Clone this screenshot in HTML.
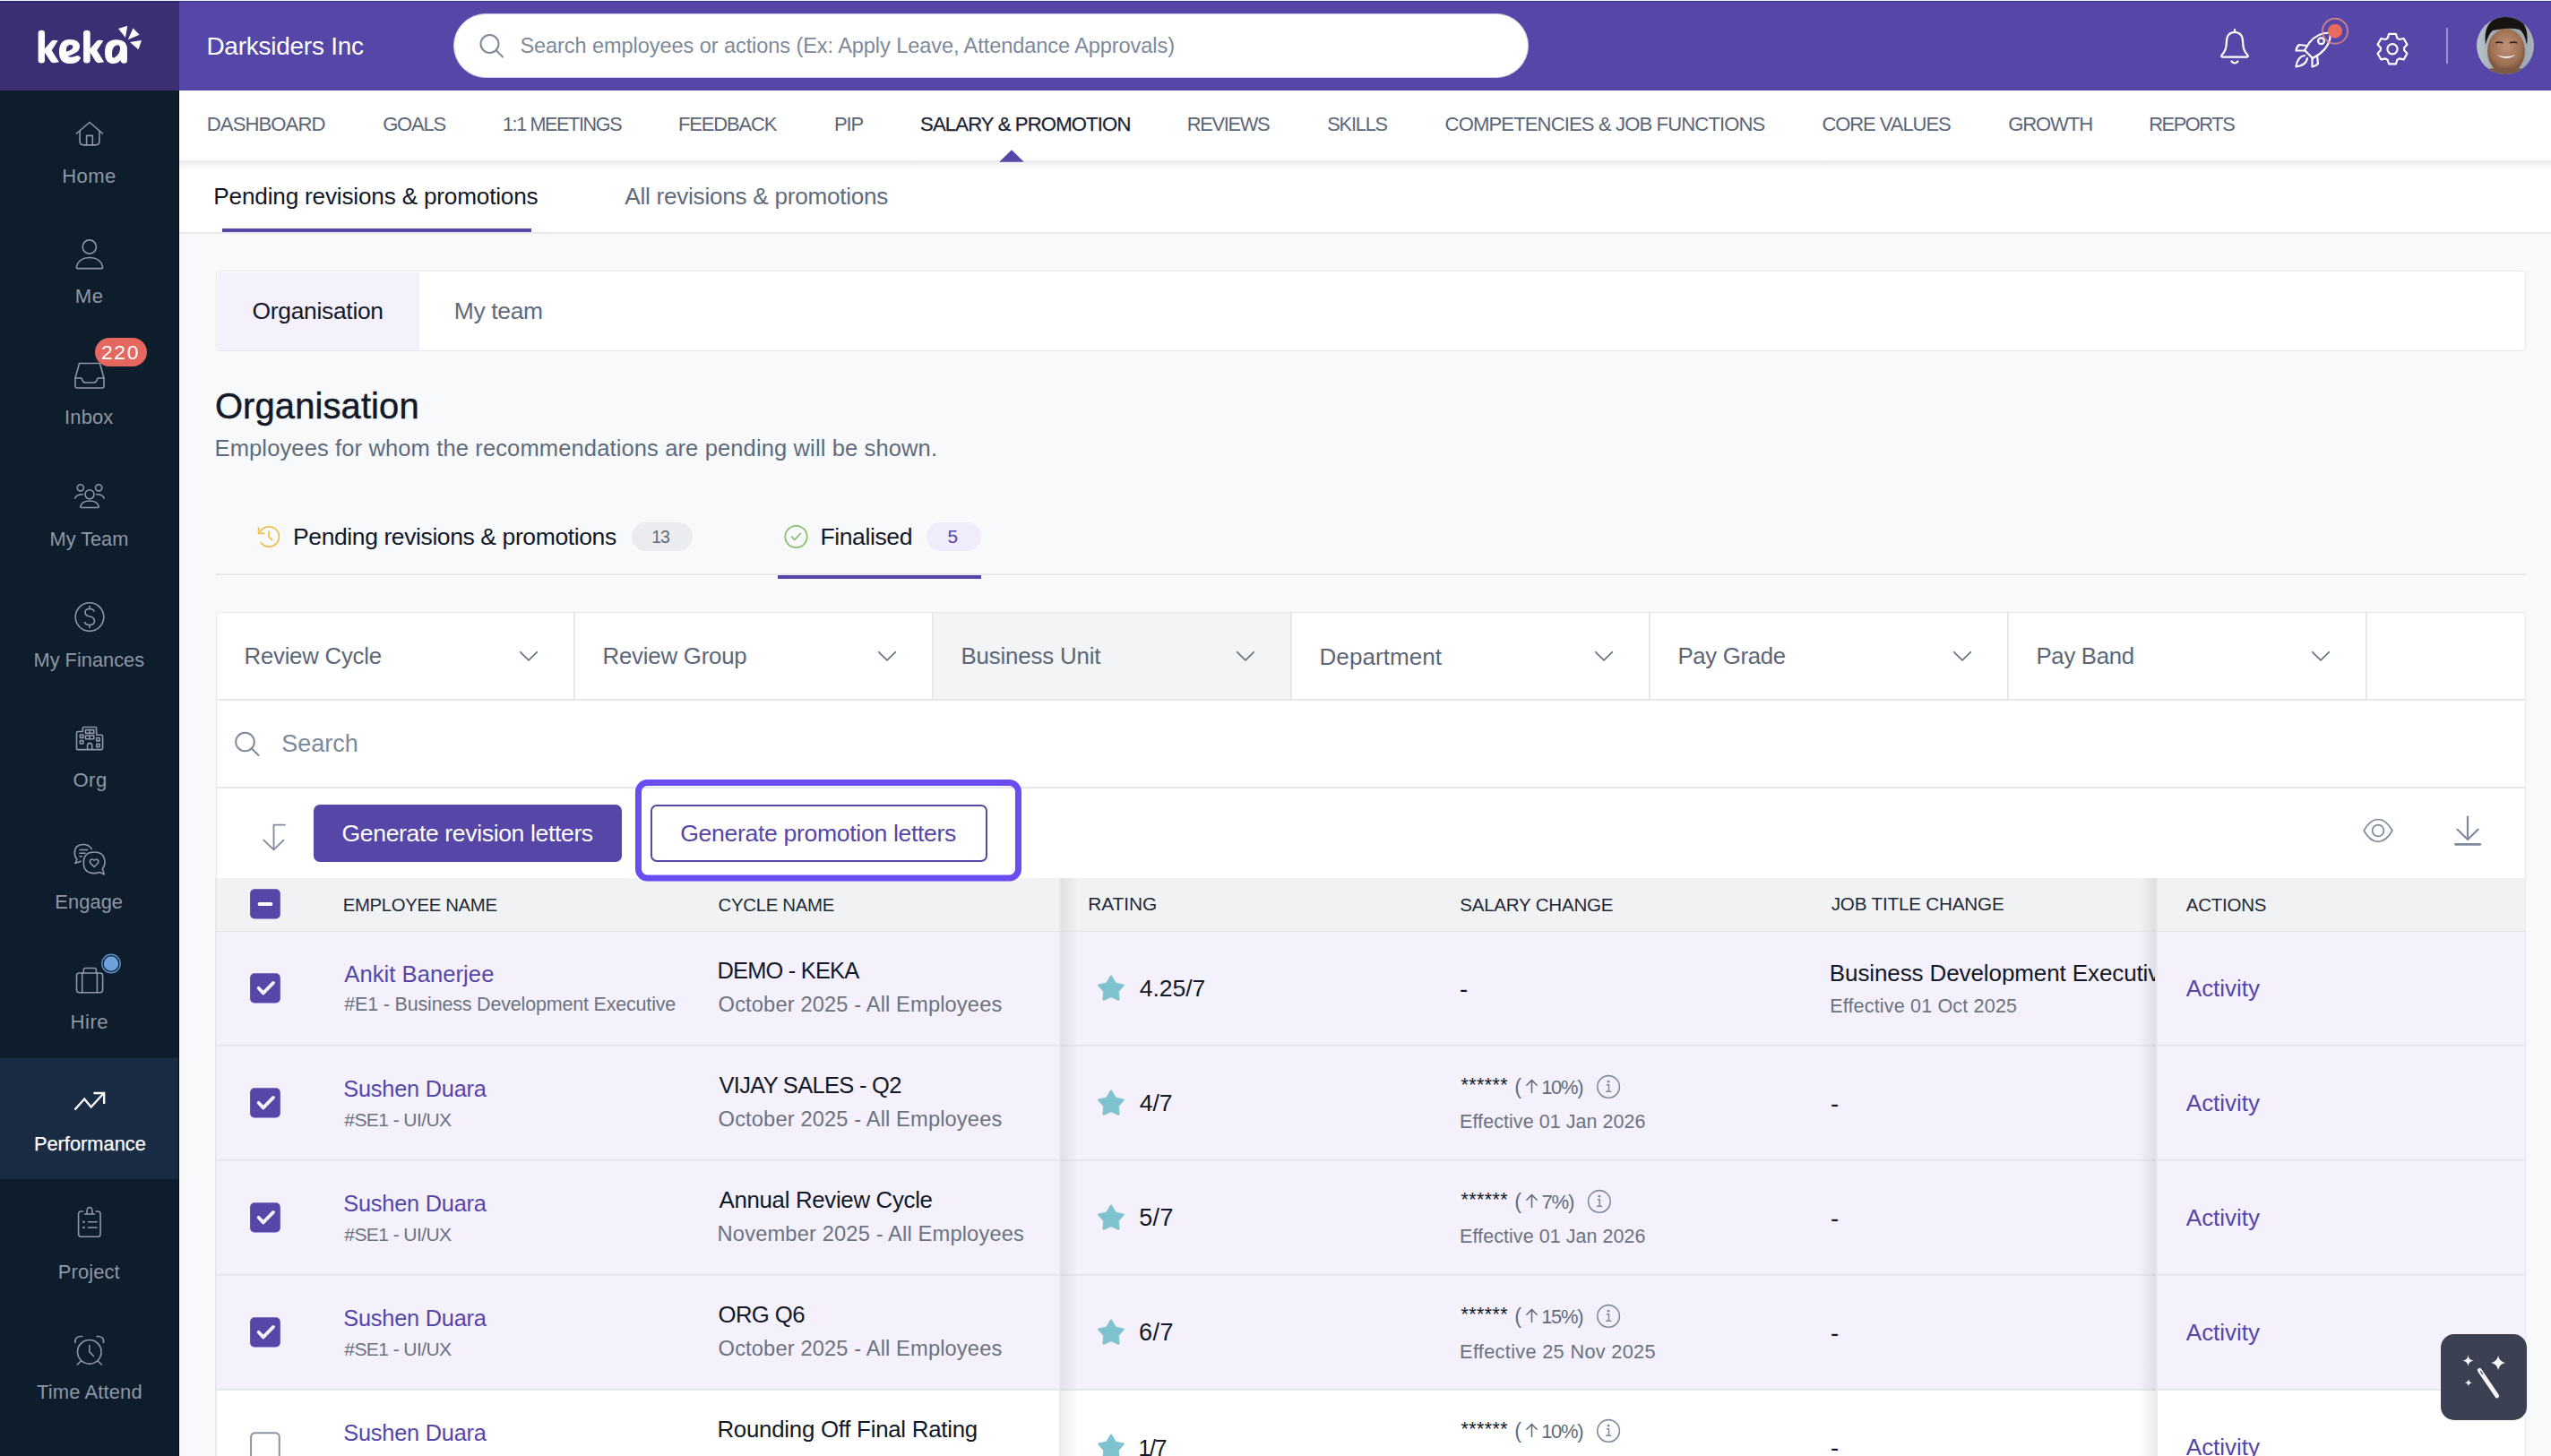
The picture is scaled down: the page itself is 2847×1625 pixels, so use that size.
<!DOCTYPE html>
<html><head><meta charset="utf-8"><title>Keka - Salary &amp; Promotion</title>
<style>
html,body{margin:0;padding:0}
body{width:2847px;height:1625px;overflow:hidden;position:relative;background:#f8f9fb;font-family:"Liberation Sans",sans-serif}
.b{position:absolute;box-sizing:border-box}
.t{position:absolute;white-space:nowrap;line-height:1;font-family:"Liberation Sans",sans-serif}
svg.ov{position:absolute;left:0;top:0}
</style></head><body>
<!-- sidebar -->
<div class="b" style="left:0;top:0;width:200px;height:1625px;background:#0e1d2c"></div>
<div class="b" style="left:0;top:0;width:200px;height:101px;background:#3b2f73"></div>
<div class="b" style="left:0;top:1181px;width:200px;height:135px;background:#192c43"></div>
<div class="b" style="left:198.8px;top:101px;width:1.2px;height:1524px;background:#03101c"></div>
<!-- topbar -->
<div class="b" style="left:200px;top:0;width:2647px;height:101px;background:#5546a8"></div>
<div class="b" style="left:506px;top:15px;width:1200px;height:71.5px;border-radius:36px;background:#fff;border:1.5px solid #cfcbe6"></div>
<div class="b" style="left:2730px;top:31px;width:2px;height:40px;background:#9d93d3"></div>
<!-- nav -->
<div class="b" style="left:200px;top:101px;width:2647px;height:78px;background:#fff"></div>
<!-- subtabs -->
<div class="b" style="left:200px;top:179px;width:2647px;height:82px;background:#fff;border-bottom:2px solid #e6e8eb"></div>
<div class="b" style="left:248px;top:254.5px;width:344.5px;height:4px;background:#5546a8"></div>
<div class="b" style="left:200px;top:179px;width:2647px;height:12px;background:linear-gradient(to bottom,rgba(30,40,70,0.085) 0px,rgba(30,40,70,0.07) 3px,rgba(0,0,0,0.03) 6px,rgba(0,0,0,0) 11px)"></div>
<!-- org box -->
<div class="b" style="left:241px;top:302px;width:2578px;height:90px;background:#fff;border:1.5px solid #e6e8eb;border-radius:4px"></div>
<div class="b" style="left:242.5px;top:303.5px;width:225px;height:87px;background:#f4f0fc;border-radius:3px 0 0 3px"></div>
<!-- status tabs -->
<div class="b" style="left:241px;top:640px;width:2578px;height:2px;background:#e6e8eb"></div>
<div class="b" style="left:868px;top:642px;width:227px;height:4px;background:#5546a8"></div>
<div class="b" style="left:705px;top:583px;width:68px;height:31.5px;border-radius:16px;background:#ebecef"></div>
<div class="b" style="left:1034.4px;top:583px;width:61px;height:31.5px;border-radius:16px;background:#f0ecfc"></div>
<!-- filter card -->
<div class="b" style="left:241px;top:682.5px;width:2578px;height:298px;background:#fff;border:1.5px solid #e6e8eb;border-bottom:none;border-radius:4px 4px 0 0"></div>
<div class="b" style="left:1041px;top:684px;width:400px;height:97px;background:#f3f4f6"></div>
<div class="b" style="left:241px;top:780px;width:2578px;height:2px;background:#e6e8eb"></div>
<div class="b" style="left:241px;top:877.5px;width:2578px;height:2px;background:#e6e8eb"></div>
<div class="b" style="left:640px;top:684px;width:2px;height:97px;background:#e6e8eb"></div>
<div class="b" style="left:1040px;top:684px;width:2px;height:97px;background:#e6e8eb"></div>
<div class="b" style="left:1440px;top:684px;width:2px;height:97px;background:#e6e8eb"></div>
<div class="b" style="left:1840px;top:684px;width:2px;height:97px;background:#e6e8eb"></div>
<div class="b" style="left:2240px;top:684px;width:2px;height:97px;background:#e6e8eb"></div>
<div class="b" style="left:2640px;top:684px;width:2px;height:97px;background:#e6e8eb"></div>
<!-- buttons -->
<div class="b" style="left:350px;top:898px;width:344px;height:64px;border-radius:7px;background:#5546a8"></div>
<div class="b" style="left:726px;top:898px;width:376px;height:64px;border-radius:7px;background:#fff;border:2px solid #5546a8"></div>
<!-- table -->
<div class="b" style="left:241px;top:980px;width:2578px;height:59px;background:#f1f2f4"></div>
<div class="b" style="left:241px;top:1038.5px;width:2578px;height:1.5px;background:#e4e6ea"></div>
<div class="b" style="left:241px;top:1040px;width:2578px;height:511px;background:#f4f1fc"></div>
<div class="b" style="left:241px;top:1551px;width:2578px;height:74px;background:#fff"></div>
<div class="b" style="left:241px;top:1166px;width:2578px;height:1.5px;background:#e9e6f2"></div>
<div class="b" style="left:241px;top:1294px;width:2578px;height:1.5px;background:#e9e6f2"></div>
<div class="b" style="left:241px;top:1422px;width:2578px;height:1.5px;background:#e9e6f2"></div>
<div class="b" style="left:241px;top:1550px;width:2578px;height:1.5px;background:#e6e8eb"></div>
<!-- sticky shadows -->
<div class="b" style="left:1182px;top:980px;width:2px;height:645px;background:#e8e9ec"></div>
<div class="b" style="left:1184px;top:980px;width:20px;height:645px;background:linear-gradient(to right,rgba(0,0,0,0.07),rgba(0,0,0,0))"></div>
<div class="b" style="left:2386px;top:980px;width:20px;height:645px;background:linear-gradient(to left,rgba(0,0,0,0.08),rgba(0,0,0,0))"></div>
<div class="b" style="left:2406px;top:980px;width:2px;height:645px;background:#e8e9ec"></div>
<div class="b" style="left:240px;top:980px;width:2px;height:645px;background:#e8e9ec"></div>
<div class="b" style="left:2817.5px;top:980px;width:1.5px;height:645px;background:#e6e8eb"></div>
<div class="b" style="left:0;top:0;width:2847px;height:1px;background:#eef4ee"></div>
<div class="b" style="left:0;top:1px;width:200px;height:1.5px;background:#2f2670"></div>
<div class="b" style="left:200px;top:1px;width:2647px;height:1.5px;background:#4a3ba3"></div>
<svg class="ov" width="2847" height="1625" viewBox="0 0 2847 1625">
<svg x="30" y="20" width="140" height="60" viewBox="0 0 2551 1093"><g fill="#fff"><path d="M230,310 Q230,250 297,250 Q365,250 365,310 L365,625 L495,472 Q515,450 555,450 L632,458 L505,662 L655,898 L545,915 Q505,915 485,888 L365,705 L365,860 Q365,918 297,918 Q230,918 230,860 Z"/><path fill-rule="evenodd" d="M1095,815 Q1040,930 880,930 Q655,930 655,690 Q655,435 875,435 Q1075,435 1075,585 Q1075,680 955,728 L830,785 Q905,810 1000,772 Q1060,748 1095,815 Z M800,688 Q790,545 885,548 Q945,552 935,600 Q925,650 800,688 Z"/><path d="M1150,310 Q1150,250 1218,250 Q1288,250 1288,310 L1288,625 L1418,472 Q1438,450 1478,450 L1555,458 L1425,662 L1570,898 L1462,915 Q1422,915 1402,888 L1288,705 L1288,860 Q1288,918 1218,918 Q1150,918 1150,860 Z"/><path fill-rule="evenodd" d="M2040,870 Q2040,925 1975,925 Q1915,925 1905,860 Q1840,930 1760,930 Q1585,930 1585,700 Q1585,440 1815,440 Q2040,440 2040,640 Z M1735,790 Q1720,670 1760,600 Q1800,548 1850,550 Q1905,560 1895,640 Q1880,740 1790,800 Q1745,825 1735,790 Z"/><path d="M1860,218 L2045,160 L2005,400 Z"/><path d="M2160,210 L2288,340 L2055,442 Z"/><path d="M2095,492 L2332,455 L2268,642 Z"/></g></svg>
<path d="M1115.2,180.8 L1129,167.2 L1142.8,180.8 Z" fill="#5546a8"/>
<g fill="none" stroke="#fff" stroke-width="2.2" stroke-linecap="round" stroke-linejoin="round"><path d="M2494,36 C2486.5,36 2484.8,42 2484.8,48 C2484.8,55 2482.5,58.5 2479.6,61.5 Q2478.3,63.6 2481,63.6 L2507,63.6 Q2509.7,63.6 2508.4,61.5 C2505.5,58.5 2503.2,55 2503.2,48 C2503.2,42 2501.5,36 2494,36 Z"/><path d="M2494,33 L2494,36"/><path d="M2490.5,68.5 Q2494,72.5 2497.5,68.5"/></g>
<g fill="none" stroke="#fff" stroke-width="2.2" stroke-linecap="round" stroke-linejoin="round"><path d="M2601,36.5 Q2586,36 2577,48 L2572,56 L2581,65 L2589,60 Q2601,51 2601,36.5 Z"/><circle cx="2590.5" cy="45.8" r="3.4"/><path d="M2575,51 L2566,50 Q2563,52 2562.5,56.5 L2572.5,56.5"/><path d="M2586,62 L2587,71 Q2585,73.5 2580.5,74.5 L2580.5,64.5"/><path d="M2572,62 Q2564,63 2562.5,74.5 Q2574,73 2575,65"/></g>
<circle cx="2606" cy="34.7" r="14" fill="none" stroke="#e58f88" stroke-opacity="0.75" stroke-width="2"/><circle cx="2606" cy="34.7" r="8" fill="#e96a5e"/>
<path d="M2664.63,42.64 L2666.13,37.94 L2673.87,37.94 L2675.37,42.64 L2677.76,44.02 L2682.58,42.97 L2686.45,49.67 L2683.13,53.32 L2683.13,56.08 L2686.45,59.73 L2682.58,66.43 L2677.76,65.38 L2675.37,66.76 L2673.87,71.46 L2666.13,71.46 L2664.63,66.76 L2662.24,65.38 L2657.42,66.43 L2653.55,59.73 L2656.87,56.08 L2656.87,53.32 L2653.55,49.67 L2657.42,42.97 L2662.24,44.02 Z" fill="none" stroke="#fff" stroke-width="2.2" stroke-linecap="round" stroke-linejoin="round"/><circle cx="2670" cy="54.7" r="5.6" fill="none" stroke="#fff" stroke-width="2.2" stroke-linecap="round" stroke-linejoin="round"/>
<defs><clipPath id="av"><circle cx="2796" cy="51" r="32"/></clipPath><radialGradient id="fg" cx="0.5" cy="0.4" r="0.6"><stop offset="0" stop-color="#c09276"/><stop offset="0.7" stop-color="#9c6e52"/><stop offset="1" stop-color="#6e4a36"/></radialGradient><linearGradient id="bgav" x1="0" y1="0" x2="1" y2="0"><stop offset="0" stop-color="#b9c3ca"/><stop offset="0.5" stop-color="#8f9aa3"/><stop offset="1" stop-color="#a9b3ba"/></linearGradient></defs><g clip-path="url(#av)"><rect x="2764" y="19" width="64" height="64" fill="url(#bgav)"/><ellipse cx="2797" cy="57" rx="21" ry="25" fill="url(#fg)"/><path d="M2774,50 Q2770,20 2797,18 Q2824,19 2820,50 Q2817,36 2812,33 Q2800,30 2782,34 Q2777,38 2774,50 Z" fill="#161311"/><path d="M2768,84 Q2772,74 2797,76 Q2822,74 2826,84 Z" fill="#7d5a45"/><path d="M2786,61 Q2797,69 2808,61 Q2797,65 2786,61 Z" fill="#f4efe9"/><path d="M2785,48 Q2789,46 2793,48 M2801,48 Q2805,46 2809,48" stroke="#2a1d17" stroke-width="1.6" fill="none"/></g>
<g fill="none" stroke="#7d8a9a" stroke-width="2" stroke-linecap="round"><circle cx="546.5" cy="49" r="10"/><path d="M553.8,56.3 L561,63.5"/></g>
<g transform="translate(75,125)" fill="none" stroke="#8e97a6" stroke-width="1.6" stroke-linecap="round" stroke-linejoin="round"><path d="M10.3,24 L25,11.5 L39.5,24"/><path d="M14.1,21.3 L14.1,32.5 Q14.1,36.9 18.5,36.9 L31.5,36.9 Q35.9,36.9 35.9,32.5 L35.9,21.3"/><path d="M21.6,36.9 L21.6,26.4 L28.3,26.4 L28.3,36.9"/></g>
<g fill="none" stroke="#8e97a6" stroke-width="1.6" stroke-linecap="round" stroke-linejoin="round"><circle cx="99.8" cy="275.5" r="7.6"/><path d="M86.2,299.6 L113.8,299.6 Q115,299.6 114.5,297.5 Q112,287.5 100,287.5 Q88,287.5 85.5,297.5 Q85,299.6 86.2,299.6 Z"/></g>
<g fill="none" stroke="#8e97a6" stroke-width="1.6" stroke-linecap="round" stroke-linejoin="round"><path d="M88.5,405.5 L111.5,405.5 L116,422 L116,431 Q116,433 114,433 L86,433 Q84,433 84,431 L84,422 Z"/><path d="M84,422 L91,422 L92.5,425.5 Q93.5,427 95,427 L105,427 Q106.5,427 107.5,425.5 L109,422 L116,422"/></g>
<rect x="106" y="377" width="58" height="32" rx="16" fill="#e5675f"/>
<g fill="none" stroke="#8e97a6" stroke-width="1.6" stroke-linecap="round" stroke-linejoin="round"><circle cx="100" cy="551.8" r="5"/><path d="M90.8,566.5 L109.2,566.5 Q110.5,566.5 110,564.5 Q108,559 100,559 Q92,559 90,564.5 Q89.5,566.5 90.8,566.5 Z"/><circle cx="89.8" cy="544.3" r="3.6"/><circle cx="110.2" cy="544.3" r="3.6"/><path d="M83.8,556 Q85,551.8 92.5,551.8"/><path d="M107.5,551.8 Q115,551.8 116.2,556"/></g>
<g fill="none" stroke="#8e97a6" stroke-width="1.6" stroke-linecap="round" stroke-linejoin="round"><circle cx="100" cy="688.6" r="15.8"/><path d="M105,682 Q104,679.5 100,679.5 Q95,679.5 95,683.5 Q95,687 100,688 Q105.5,689 105.5,693 Q105.5,697.5 100,697.5 Q95.5,697.5 94.5,694.5"/><path d="M100,676.5 L100,679.5 M100,697.5 L100,700.5"/></g>
<g fill="none" stroke="#8e97a6" stroke-width="1.6" stroke-linecap="round" stroke-linejoin="round"><path d="M85.5,836.2 L85.5,818 Q85.5,816.5 87,816.5 L92.3,816.5 L92.3,813 Q92.3,811.5 93.8,811.5 L106,811.5 Q107.6,811.5 107.6,813 L107.6,820.3 L113,820.3 Q114.6,820.3 114.6,821.8 L114.6,835 Q114.6,836.6 113,836.6 L87,836.6 Q85.5,836.6 85.5,836.2 Z"/><rect x="89.4" y="820" width="3.4" height="3.4"/><rect x="89.4" y="826.6" width="3.4" height="3.4"/><rect x="107.8" y="823.5" width="3.4" height="3.4"/><rect x="107.8" y="830.2" width="3.4" height="3.4"/><rect x="95.4" y="814.6" width="9.4" height="3.8"/><path d="M100.1,814.6 L100.1,818.4"/><rect x="95.4" y="821" width="9.4" height="3.8"/><path d="M100.1,821 L100.1,824.8"/><path d="M97.6,836.5 L97.6,832 Q97.6,829.4 100.1,829.4 Q102.7,829.4 102.7,832 L102.7,836.5"/></g>
<g fill="none" stroke="#8e97a6" stroke-width="1.6" stroke-linecap="round" stroke-linejoin="round"><path d="M102.3,947.5 Q99,942.5 93.3,942.5 Q83.3,942.5 83.3,952 Q83.3,956.5 86,959 L84,963.5 L90,961.2"/><path d="M89,948.5 L97.5,948.5 M89,952.2 L95,952.2 M89,955.8 L91.5,955.8"/><path d="M116.3,975.8 L114.3,969.8 Q117,966.5 117,962.8 Q117,951 105.1,951 Q93.3,951 93.3,962.8 Q93.3,974.6 105.1,974.6 Q108.5,974.6 111,973.5 Z"/><path d="M105.1,967.5 L101.3,963.8 Q99.6,961.6 101,959.8 Q103,958 105.1,960.3 Q107.2,958 109.2,959.8 Q110.6,961.6 108.9,963.8 Z"/></g>
<g fill="none" stroke="#8e97a6" stroke-width="1.6" stroke-linecap="round" stroke-linejoin="round"><rect x="85.5" y="1086" width="29.1" height="21.7" rx="3"/><path d="M93.3,1086 L93.3,1082.5 Q93.3,1080.5 95.3,1080.5 L105.4,1080.5 Q107.4,1080.5 107.4,1082.5 L107.4,1086"/><path d="M91.7,1086 L91.7,1107.7 M108.4,1086 L108.4,1107.7"/></g>
<circle cx="124" cy="1075.5" r="10.2" fill="#0e1d2c" stroke="#5b8fcf" stroke-width="1.4"/><circle cx="124" cy="1075.5" r="8.2" fill="#6ea0da"/>
<g fill="none" stroke="#fff" stroke-width="2.3" stroke-linecap="square" stroke-linejoin="miter"><path d="M84.3,1237.6 L94.2,1226.6 L101.6,1235.6 L115.6,1220.4"/><path d="M105.6,1220 L116.2,1220 L116.2,1230.8"/></g>
<g fill="none" stroke="#8e97a6" stroke-width="1.6" stroke-linecap="round" stroke-linejoin="round"><path d="M92.5,1352 L90.5,1352 Q87.6,1352 87.6,1355 L87.6,1377.3 Q87.6,1380.3 90.6,1380.3 L109.1,1380.3 Q112.1,1380.3 112.1,1377.3 L112.1,1355 Q112.1,1352 109.1,1352 L107.2,1352"/><path d="M94.5,1355 L105.5,1355"/><path d="M97,1354.5 L97,1352.5 Q97,1347.5 100,1347.5 Q103,1347.5 103,1352.5 L103,1354.5"/><path d="M98.5,1363.8 L108,1363.8 M98.5,1370 L108,1370"/></g>
<circle cx="93.5" cy="1363.8" r="1.3" fill="#8e97a6"/><circle cx="93.5" cy="1370" r="1.3" fill="#8e97a6"/>
<g fill="none" stroke="#8e97a6" stroke-width="1.6" stroke-linecap="round" stroke-linejoin="round"><circle cx="99.8" cy="1508.8" r="13.3"/><path d="M99.8,1501.5 L99.8,1508.8 L104.5,1513.5"/><path d="M84,1498.5 Q83,1491 91.5,1491.5"/><path d="M108,1491.5 Q116.5,1491 115.5,1498.5"/><path d="M86.3,1523 L90.3,1519 M113.3,1523 L109.3,1519"/></g>
<g fill="none" stroke="#f0bd45" stroke-width="1.7" stroke-linecap="round" stroke-linejoin="round"><path d="M290.8,593 A11.2,11.2 0 1 1 291.2,605.6"/><path d="M288.6,589.3 L288.6,595.4 L294.8,595.4"/><path d="M300,593.4 L300,599 L303.6,602.6"/></g>
<g fill="none" stroke="#86bd6d" stroke-width="1.7" stroke-linecap="round" stroke-linejoin="round"><circle cx="888.5" cy="599" r="12.2"/><path d="M883.6,599.1 L886.8,602.3 L893.3,595.5"/></g>
<path d="M580.8,727.8 L590.0,736.8 L599.1999999999999,727.8" fill="none" stroke="#6b7686" stroke-width="1.8" stroke-linecap="round" stroke-linejoin="round"/>
<path d="M980.8,727.8 L990.0,736.8 L999.1999999999999,727.8" fill="none" stroke="#6b7686" stroke-width="1.8" stroke-linecap="round" stroke-linejoin="round"/>
<path d="M1380.8,727.8 L1390.0,736.8 L1399.2,727.8" fill="none" stroke="#6b7686" stroke-width="1.8" stroke-linecap="round" stroke-linejoin="round"/>
<path d="M1780.8,727.8 L1790.0,736.8 L1799.2,727.8" fill="none" stroke="#6b7686" stroke-width="1.8" stroke-linecap="round" stroke-linejoin="round"/>
<path d="M2180.8,727.8 L2190.0,736.8 L2199.2000000000003,727.8" fill="none" stroke="#6b7686" stroke-width="1.8" stroke-linecap="round" stroke-linejoin="round"/>
<path d="M2580.8,727.8 L2590.0,736.8 L2599.2000000000003,727.8" fill="none" stroke="#6b7686" stroke-width="1.8" stroke-linecap="round" stroke-linejoin="round"/>
<g fill="none" stroke="#7d8a9a" stroke-width="2" stroke-linecap="round"><circle cx="273.5" cy="828" r="10.3"/><path d="M281,835.5 L288.6,843"/></g>
<g fill="none" stroke="#7d8a9a" stroke-width="1.8" stroke-linecap="round" stroke-linejoin="round"><path d="M318,920.6 L305.5,920.6 L305.5,948"/><path d="M294.3,937.6 L305.5,948.3 L316.5,937.6"/></g>
<g fill="none" stroke="#7d8a9a" stroke-width="1.7" stroke-linecap="round" stroke-linejoin="round"><path d="M2638.2,927 Q2645,914.5 2654,914.5 Q2663,914.5 2669.8,927 Q2663,939.3 2654,939.3 Q2645,939.3 2638.2,927 Z"/><circle cx="2654" cy="927" r="6.4"/></g>
<g fill="none" stroke="#7d8a9a" stroke-width="2.2" stroke-linecap="round" stroke-linejoin="round"><path d="M2754,911.5 L2754,936.5"/><path d="M2742.5,925.8 L2754,937 L2765.5,925.8"/><path d="M2740.5,942.3 L2767.8,942.3" stroke-width="2.7"/></g>
<rect x="279.1" y="992.2" width="33.7" height="33.2" rx="5" fill="#5546a8"/><path d="M289.5,1009 L302.5,1009" stroke="#fff" stroke-width="3.8" stroke-linecap="round"/>
<rect x="279.1" y="1086.2" width="33.7" height="33.2" rx="5" fill="#5546a8"/><path d="M288.6,1102.8 L293.8,1108.4 L305,1096.9" fill="none" stroke="#f4f1fc" stroke-width="3.8" stroke-linecap="round" stroke-linejoin="round"/>
<path d="M1240.00,1089.60 L1244.70,1097.53 L1253.70,1099.55 L1247.61,1106.47 L1248.46,1115.65 L1240.00,1112.00 L1231.54,1115.65 L1232.39,1106.47 L1226.30,1099.55 L1235.30,1097.53 Z" fill="#7fc3d1" stroke="#7fc3d1" stroke-width="2.2" stroke-linejoin="round"/>
<rect x="279.1" y="1214.2" width="33.7" height="33.2" rx="5" fill="#5546a8"/><path d="M288.6,1230.8 L293.8,1236.4 L305,1224.9" fill="none" stroke="#f4f1fc" stroke-width="3.8" stroke-linecap="round" stroke-linejoin="round"/>
<path d="M1240.00,1217.60 L1244.70,1225.53 L1253.70,1227.55 L1247.61,1234.47 L1248.46,1243.65 L1240.00,1240.00 L1231.54,1243.65 L1232.39,1234.47 L1226.30,1227.55 L1235.30,1225.53 Z" fill="#7fc3d1" stroke="#7fc3d1" stroke-width="2.2" stroke-linejoin="round"/>
<g fill="none" stroke="#5f6b7a" stroke-width="1.5" stroke-linecap="round" stroke-linejoin="round"><path d="M1709.5,1205.6 L1709.5,1219.4"/><path d="M1703.8,1211.3 L1709.5,1205.6 L1715.2,1211.3"/></g>
<g fill="none" stroke="#7d8a9a" stroke-width="1.6"><circle cx="1795.1" cy="1212.9" r="12.3"/></g><circle cx="1795.1" cy="1207.2" r="1.4" fill="#7d8a9a"/><path d="M1792.8999999999999,1210.8 L1795.5,1210.8 L1795.5,1218.2 M1792.1,1218.2 L1798.3,1218.2" fill="none" stroke="#7d8a9a" stroke-width="1.5"/>
<rect x="279.1" y="1342.2" width="33.7" height="33.2" rx="5" fill="#5546a8"/><path d="M288.6,1358.8 L293.8,1364.4 L305,1352.9" fill="none" stroke="#f4f1fc" stroke-width="3.8" stroke-linecap="round" stroke-linejoin="round"/>
<path d="M1240.00,1345.60 L1244.70,1353.53 L1253.70,1355.55 L1247.61,1362.47 L1248.46,1371.65 L1240.00,1368.00 L1231.54,1371.65 L1232.39,1362.47 L1226.30,1355.55 L1235.30,1353.53 Z" fill="#7fc3d1" stroke="#7fc3d1" stroke-width="2.2" stroke-linejoin="round"/>
<g fill="none" stroke="#5f6b7a" stroke-width="1.5" stroke-linecap="round" stroke-linejoin="round"><path d="M1709.5,1333.6 L1709.5,1347.4"/><path d="M1703.8,1339.3 L1709.5,1333.6 L1715.2,1339.3"/></g>
<g fill="none" stroke="#7d8a9a" stroke-width="1.6"><circle cx="1784.9" cy="1340.9" r="12.3"/></g><circle cx="1784.9" cy="1335.2" r="1.4" fill="#7d8a9a"/><path d="M1782.7,1338.8 L1785.3000000000002,1338.8 L1785.3000000000002,1346.2 M1781.9,1346.2 L1788.1000000000001,1346.2" fill="none" stroke="#7d8a9a" stroke-width="1.5"/>
<rect x="279.1" y="1470.2" width="33.7" height="33.2" rx="5" fill="#5546a8"/><path d="M288.6,1486.8 L293.8,1492.4 L305,1480.9" fill="none" stroke="#f4f1fc" stroke-width="3.8" stroke-linecap="round" stroke-linejoin="round"/>
<path d="M1240.00,1473.60 L1244.70,1481.53 L1253.70,1483.55 L1247.61,1490.47 L1248.46,1499.65 L1240.00,1496.00 L1231.54,1499.65 L1232.39,1490.47 L1226.30,1483.55 L1235.30,1481.53 Z" fill="#7fc3d1" stroke="#7fc3d1" stroke-width="2.2" stroke-linejoin="round"/>
<g fill="none" stroke="#5f6b7a" stroke-width="1.5" stroke-linecap="round" stroke-linejoin="round"><path d="M1709.5,1461.6 L1709.5,1475.4"/><path d="M1703.8,1467.3 L1709.5,1461.6 L1715.2,1467.3"/></g>
<g fill="none" stroke="#7d8a9a" stroke-width="1.6"><circle cx="1795.1" cy="1468.9" r="12.3"/></g><circle cx="1795.1" cy="1463.2" r="1.4" fill="#7d8a9a"/><path d="M1792.8999999999999,1466.8 L1795.5,1466.8 L1795.5,1474.2 M1792.1,1474.2 L1798.3,1474.2" fill="none" stroke="#7d8a9a" stroke-width="1.5"/>
<rect x="280.1" y="1599.2" width="31.7" height="31.2" rx="4.5" fill="#fff" stroke="#8a94a3" stroke-width="2"/>
<path d="M1240.00,1601.60 L1244.70,1609.53 L1253.70,1611.55 L1247.61,1618.47 L1248.46,1627.65 L1240.00,1624.00 L1231.54,1627.65 L1232.39,1618.47 L1226.30,1611.55 L1235.30,1609.53 Z" fill="#7fc3d1" stroke="#7fc3d1" stroke-width="2.2" stroke-linejoin="round"/>
<g fill="none" stroke="#5f6b7a" stroke-width="1.5" stroke-linecap="round" stroke-linejoin="round"><path d="M1709.5,1589.6 L1709.5,1603.4"/><path d="M1703.8,1595.3 L1709.5,1589.6 L1715.2,1595.3"/></g>
<g fill="none" stroke="#7d8a9a" stroke-width="1.6"><circle cx="1795.1" cy="1596.9" r="12.3"/></g><circle cx="1795.1" cy="1591.2" r="1.4" fill="#7d8a9a"/><path d="M1792.8999999999999,1594.8 L1795.5,1594.8 L1795.5,1602.2 M1792.1,1602.2 L1798.3,1602.2" fill="none" stroke="#7d8a9a" stroke-width="1.5"/>
<rect x="712.5" y="873.5" width="424" height="106.5" rx="10" fill="none" stroke="#6a4df0" stroke-width="7"/>
<rect x="2724" y="1489" width="96" height="96" rx="15" fill="#3b4152"/>
<path d="M2767.3,1529.3 L2786.7,1557.9" stroke="#f6f7f9" stroke-width="4.8" stroke-linecap="round"/><path d="M2768.5,1530.5 L2770.5,1533.5" stroke="#3b4152" stroke-width="1.2" stroke-linecap="round"/>
<path d="M2788.1,1513.1 Q2789.4,1519.8 2796.1,1521.1 Q2789.4,1522.3999999999999 2788.1,1529.1 Q2786.7999999999997,1522.3999999999999 2780.1,1521.1 Q2786.7999999999997,1519.8 2788.1,1513.1 Z" fill="#f6f7f9"/>
<path d="M2754.5,1512.3 Q2754.95,1518.25 2760.9,1518.7 Q2754.95,1519.15 2754.5,1525.1000000000001 Q2754.05,1519.15 2748.1,1518.7 Q2754.05,1518.25 2754.5,1512.3 Z" fill="#f6f7f9"/>
<path d="M2754.9,1539.2 Q2755.35,1542.75 2758.9,1543.2 Q2755.35,1543.65 2754.9,1547.2 Q2754.4500000000003,1543.65 2750.9,1543.2 Q2754.4500000000003,1542.75 2754.9,1539.2 Z" fill="#f6f7f9"/>
</svg>
<span class="t" style="left:69.2px;top:185.9px;font-size:22.06px;color:#8e97a6;letter-spacing:0.41px">Home</span>
<span class="t" style="left:83.7px;top:320.4px;font-size:22.11px;color:#8e97a6;letter-spacing:0.75px">Me</span>
<span class="t" style="left:72.1px;top:455.1px;font-size:21.93px;color:#8e97a6;letter-spacing:0.14px">Inbox</span>
<span class="t" style="left:55.6px;top:591.1px;font-size:21.77px;color:#8e97a6;letter-spacing:-0.03px">My Team</span>
<span class="t" style="left:37.5px;top:726.1px;font-size:21.80px;color:#8e97a6">My Finances</span>
<span class="t" style="left:81.4px;top:860.2px;font-size:22.12px;color:#8e97a6;letter-spacing:0.48px">Org</span>
<span class="t" style="left:61.3px;top:995.6px;font-size:21.86px;color:#8e97a6;letter-spacing:0.07px">Engage</span>
<span class="t" style="left:78.6px;top:1130.4px;font-size:22.19px;color:#8e97a6;letter-spacing:0.43px">Hire</span>
<span class="t" style="left:37.9px;top:1265.5px;font-size:21.82px;color:#ffffff;letter-spacing:0.01px;-webkit-text-stroke:0.25px #ffffff">Performance</span>
<span class="t" style="left:64.8px;top:1409.1px;font-size:21.92px;color:#8e97a6;letter-spacing:0.11px">Project</span>
<span class="t" style="left:41.0px;top:1542.9px;font-size:21.94px;color:#8e97a6;letter-spacing:0.14px">Time Attend</span>
<span class="t" style="left:112.9px;top:381.8px;font-size:22.88px;color:#ffffff;letter-spacing:1.70px">220</span>
<span class="t" style="left:230.4px;top:37.6px;font-size:27.95px;color:#ffffff;letter-spacing:-0.22px">Darksiders Inc</span>
<span class="t" style="left:580.4px;top:40.0px;font-size:23.59px;color:#7d8a9a;letter-spacing:-0.09px">Search employees or actions (Ex: Apply Leave, Attendance Approvals)</span>
<span class="t" style="left:230.8px;top:128.0px;font-size:22.14px;color:#5b6676;letter-spacing:-0.94px">DASHBOARD</span>
<span class="t" style="left:427.2px;top:128.1px;font-size:22.00px;color:#5b6676;letter-spacing:-1.22px">GOALS</span>
<span class="t" style="left:561.0px;top:128.5px;font-size:21.54px;color:#5b6676;letter-spacing:-1.35px">1:1 MEETINGS</span>
<span class="t" style="left:757.0px;top:128.1px;font-size:21.96px;color:#5b6676;letter-spacing:-1.15px">FEEDBACK</span>
<span class="t" style="left:930.9px;top:128.1px;font-size:21.99px;color:#5b6676;letter-spacing:-1.08px">PIP</span>
<span class="t" style="left:1027.0px;top:128.0px;font-size:22.10px;color:#1a2332;letter-spacing:-0.84px;-webkit-text-stroke:0.25px #1a2332">SALARY &amp; PROMOTION</span>
<span class="t" style="left:1324.7px;top:128.2px;font-size:21.82px;color:#5b6676;letter-spacing:-1.30px">REVIEWS</span>
<span class="t" style="left:1481.3px;top:128.3px;font-size:21.78px;color:#5b6676;letter-spacing:-1.20px">SKILLS</span>
<span class="t" style="left:1612.6px;top:128.1px;font-size:22.06px;color:#5b6676;letter-spacing:-0.86px">COMPETENCIES &amp; JOB FUNCTIONS</span>
<span class="t" style="left:2033.4px;top:128.1px;font-size:21.98px;color:#5b6676;letter-spacing:-1.03px">CORE VALUES</span>
<span class="t" style="left:2241.2px;top:128.0px;font-size:22.10px;color:#5b6676;letter-spacing:-1.13px">GROWTH</span>
<span class="t" style="left:2398.2px;top:128.3px;font-size:21.79px;color:#5b6676;letter-spacing:-1.40px">REPORTS</span>
<span class="t" style="left:238.3px;top:206.3px;font-size:26.21px;color:#111827;letter-spacing:-0.21px">Pending revisions &amp; promotions</span>
<span class="t" style="left:697.3px;top:206.4px;font-size:26.14px;color:#5f6b7a;letter-spacing:-0.26px">All revisions &amp; promotions</span>
<span class="t" style="left:281.6px;top:334.3px;font-size:26.42px;color:#111827;letter-spacing:-0.30px">Organisation</span>
<span class="t" style="left:506.8px;top:334.3px;font-size:26.44px;color:#5f6b7a;letter-spacing:-0.35px">My team</span>
<span class="t" style="left:239.9px;top:433.8px;font-size:39.95px;color:#111827;letter-spacing:0.12px;-webkit-text-stroke:0.45px #111827">Organisation</span>
<span class="t" style="left:239.5px;top:488.3px;font-size:25.56px;color:#5f6b7a;letter-spacing:0.11px">Employees for whom the recommendations are pending will be shown.</span>
<span class="t" style="left:327.0px;top:586.3px;font-size:26.55px;color:#111827;letter-spacing:-0.42px">Pending revisions &amp; promotions</span>
<span class="t" style="left:727.2px;top:589.9px;font-size:19.49px;color:#5f6b7a;letter-spacing:-1.01px">13</span>
<span class="t" style="left:915.4px;top:586.3px;font-size:26.57px;color:#111827;letter-spacing:-0.40px">Finalised</span>
<span class="t" style="left:1057.6px;top:588.8px;font-size:20.88px;color:#5546a8">5</span>
<span class="t" style="left:272.5px;top:719.7px;font-size:25.78px;color:#5b6676;letter-spacing:-0.23px">Review Cycle</span>
<span class="t" style="left:672.5px;top:719.7px;font-size:25.81px;color:#5b6676;letter-spacing:-0.21px">Review Group</span>
<span class="t" style="left:1072.5px;top:719.6px;font-size:25.84px;color:#5b6676;letter-spacing:-0.16px">Business Unit</span>
<span class="t" style="left:1472.5px;top:719.5px;font-size:26.05px;color:#5b6676;letter-spacing:0.04px">Department</span>
<span class="t" style="left:1872.5px;top:719.7px;font-size:25.73px;color:#5b6676;letter-spacing:-0.31px">Pay Grade</span>
<span class="t" style="left:2272.5px;top:719.7px;font-size:25.74px;color:#5b6676;letter-spacing:-0.30px">Pay Band</span>
<span class="t" style="left:314.2px;top:816.9px;font-size:27.03px;color:#7d8a9a">Search</span>
<span class="t" style="left:381.5px;top:917.4px;font-size:26.59px;color:#ffffff;letter-spacing:-0.37px">Generate revision letters</span>
<span class="t" style="left:759.2px;top:917.4px;font-size:26.64px;color:#5546a8;letter-spacing:-0.34px">Generate promotion letters</span>
<span class="t" style="left:382.7px;top:999.7px;font-size:20.35px;color:#1f2937;letter-spacing:-0.34px">EMPLOYEE NAME</span>
<span class="t" style="left:801.5px;top:999.6px;font-size:20.41px;color:#1f2937;letter-spacing:-0.31px">CYCLE NAME</span>
<span class="t" style="left:1214.3px;top:999.2px;font-size:20.88px;color:#1f2937;letter-spacing:-0.09px">RATING</span>
<span class="t" style="left:1629.2px;top:999.5px;font-size:20.57px;color:#1f2937;letter-spacing:-0.23px">SALARY CHANGE</span>
<span class="t" style="left:2043.7px;top:999.4px;font-size:20.65px;color:#1f2937;letter-spacing:-0.18px">JOB TITLE CHANGE</span>
<span class="t" style="left:2439.8px;top:999.5px;font-size:20.54px;color:#1f2937;letter-spacing:-0.26px">ACTIONS</span>
<span class="t" style="left:384.3px;top:1074.5px;font-size:25.62px;color:#5546a8;letter-spacing:0.04px">Ankit Banerjee</span>
<span class="t" style="left:384.3px;top:1111.1px;font-size:21.47px;color:#6b7280;letter-spacing:-0.17px">#E1 - Business Development Executive</span>
<span class="t" style="left:800.5px;top:1071.2px;font-size:25.46px;color:#111827;letter-spacing:-0.82px">DEMO - KEKA</span>
<span class="t" style="left:801.6px;top:1109.9px;font-size:23.68px;color:#6b7280;letter-spacing:0.13px">October 2025 - All Employees</span>
<span class="t" style="left:1271.8px;top:1090.4px;font-size:26.55px;color:#111827;letter-spacing:-0.05px">4.25/7</span>
<span class="t" style="left:1628.9px;top:1089.7px;font-size:27.45px;color:#111827">-</span>
<span class="t" style="left:2041.8px;top:1072.6px;font-size:26.04px;color:#111827;letter-spacing:-0.12px;width:363.2px;overflow:hidden">Business Development Executive</span>
<span class="t" style="left:2042.2px;top:1112.4px;font-size:21.55px;color:#6b7280;letter-spacing:0.16px">Effective 01 Oct 2025</span>
<span class="t" style="left:2439.8px;top:1090.3px;font-size:26.09px;color:#5546a8;letter-spacing:-0.06px">Activity</span>
<span class="t" style="left:383.3px;top:1202.7px;font-size:25.36px;color:#5546a8;letter-spacing:-0.23px">Sushen Duara</span>
<span class="t" style="left:384.3px;top:1239.4px;font-size:21.05px;color:#6b7280;letter-spacing:-0.59px">#SE1 - UI/UX</span>
<span class="t" style="left:802.5px;top:1199.2px;font-size:25.47px;color:#111827;letter-spacing:-0.69px">VIJAY SALES - Q2</span>
<span class="t" style="left:801.6px;top:1237.9px;font-size:23.68px;color:#6b7280;letter-spacing:0.13px">October 2025 - All Employees</span>
<span class="t" style="left:1271.8px;top:1218.4px;font-size:26.54px;color:#111827;letter-spacing:-0.07px">4/7</span>
<span class="t" style="left:1630.6px;top:1200.7px;font-size:21.40px;color:#111827;letter-spacing:0.39px">******</span>
<span class="t" style="left:1690.3px;top:1201.9px;font-size:23.35px;color:#5f6b7a">(</span>
<span class="t" style="left:1720.2px;top:1203.0px;font-size:21.96px;color:#5f6b7a;letter-spacing:-1.29px">10%)</span>
<span class="t" style="left:1629.1px;top:1241.8px;font-size:21.45px;color:#6b7280;letter-spacing:0.08px">Effective 01 Jan 2026</span>
<span class="t" style="left:2042.9px;top:1217.7px;font-size:27.45px;color:#111827">-</span>
<span class="t" style="left:2439.8px;top:1218.3px;font-size:26.09px;color:#5546a8;letter-spacing:-0.06px">Activity</span>
<span class="t" style="left:383.3px;top:1330.7px;font-size:25.36px;color:#5546a8;letter-spacing:-0.23px">Sushen Duara</span>
<span class="t" style="left:384.3px;top:1367.4px;font-size:21.05px;color:#6b7280;letter-spacing:-0.59px">#SE1 - UI/UX</span>
<span class="t" style="left:802.5px;top:1326.8px;font-size:25.83px;color:#111827;letter-spacing:-0.31px">Annual Review Cycle</span>
<span class="t" style="left:800.6px;top:1365.9px;font-size:23.69px;color:#6b7280;letter-spacing:0.14px">November 2025 - All Employees</span>
<span class="t" style="left:1271.2px;top:1346.1px;font-size:26.95px;color:#111827;letter-spacing:0.43px">5/7</span>
<span class="t" style="left:1630.6px;top:1328.7px;font-size:21.40px;color:#111827;letter-spacing:0.39px">******</span>
<span class="t" style="left:1690.3px;top:1329.9px;font-size:23.35px;color:#5f6b7a">(</span>
<span class="t" style="left:1720.6px;top:1330.9px;font-size:22.11px;color:#5f6b7a;letter-spacing:-1.27px">7%)</span>
<span class="t" style="left:1629.1px;top:1369.8px;font-size:21.45px;color:#6b7280;letter-spacing:0.08px">Effective 01 Jan 2026</span>
<span class="t" style="left:2042.9px;top:1345.7px;font-size:27.45px;color:#111827">-</span>
<span class="t" style="left:2439.8px;top:1346.3px;font-size:26.09px;color:#5546a8;letter-spacing:-0.06px">Activity</span>
<span class="t" style="left:383.3px;top:1458.7px;font-size:25.36px;color:#5546a8;letter-spacing:-0.23px">Sushen Duara</span>
<span class="t" style="left:384.3px;top:1495.4px;font-size:21.05px;color:#6b7280;letter-spacing:-0.59px">#SE1 - UI/UX</span>
<span class="t" style="left:801.5px;top:1454.9px;font-size:25.72px;color:#111827;letter-spacing:-0.61px">ORG Q6</span>
<span class="t" style="left:801.6px;top:1493.9px;font-size:23.68px;color:#6b7280;letter-spacing:0.13px">October 2025 - All Employees</span>
<span class="t" style="left:1270.9px;top:1474.0px;font-size:27.02px;color:#111827;letter-spacing:0.52px">6/7</span>
<span class="t" style="left:1630.6px;top:1456.7px;font-size:21.40px;color:#111827;letter-spacing:0.39px">******</span>
<span class="t" style="left:1690.3px;top:1457.9px;font-size:23.35px;color:#5f6b7a">(</span>
<span class="t" style="left:1720.2px;top:1459.0px;font-size:21.96px;color:#5f6b7a;letter-spacing:-1.29px">15%)</span>
<span class="t" style="left:1629.1px;top:1497.5px;font-size:21.72px;color:#6b7280;letter-spacing:0.32px">Effective 25 Nov 2025</span>
<span class="t" style="left:2042.9px;top:1473.7px;font-size:27.45px;color:#111827">-</span>
<span class="t" style="left:2439.8px;top:1474.3px;font-size:26.09px;color:#5546a8;letter-spacing:-0.06px">Activity</span>
<span class="t" style="left:383.3px;top:1586.7px;font-size:25.36px;color:#5546a8;letter-spacing:-0.23px">Sushen Duara</span>
<span class="t" style="left:800.4px;top:1582.8px;font-size:25.87px;color:#111827;letter-spacing:-0.26px">Rounding Off Final Rating</span>
<span class="t" style="left:1270.5px;top:1603.6px;font-size:25.19px;color:#111827;letter-spacing:-1.54px">1/7</span>
<span class="t" style="left:1630.6px;top:1584.7px;font-size:21.40px;color:#111827;letter-spacing:0.39px">******</span>
<span class="t" style="left:1690.3px;top:1585.9px;font-size:23.35px;color:#5f6b7a">(</span>
<span class="t" style="left:1720.2px;top:1587.0px;font-size:21.96px;color:#5f6b7a;letter-spacing:-1.29px">10%)</span>
<span class="t" style="left:2042.9px;top:1601.7px;font-size:27.45px;color:#111827">-</span>
<span class="t" style="left:2439.8px;top:1602.3px;font-size:26.09px;color:#5546a8;letter-spacing:-0.06px">Activity</span>
</body></html>
